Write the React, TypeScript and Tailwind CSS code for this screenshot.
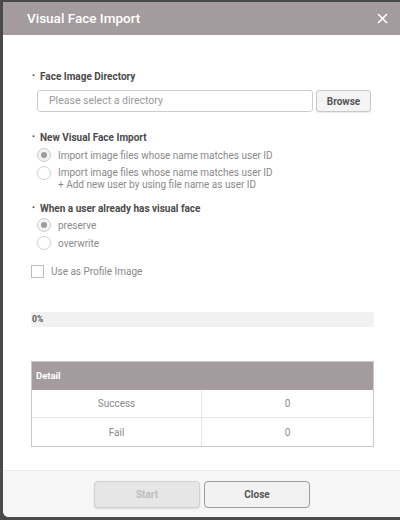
import React from "react";

const font = { fontFamily: "Roboto, 'Liberation Sans', sans-serif" };

function Radio({ checked }: { checked?: boolean }) {
    return (
        <span
            className={
                "flex h-[14px] w-[14px] shrink-0 items-center justify-center rounded-full border border-[#cfcfcf] " +
                (checked ? "bg-[#f3f3f3]" : "bg-white")
            }
        >
            {checked && <span className="h-[6px] w-[6px] rounded-full bg-[#a09a9c]" />}
        </span>
    );
}

function SectionLabel({ children }: { children: React.ReactNode }) {
    return (
        <div className="flex h-[14px] items-center text-[10px] font-bold text-[#4a4a4a]">
            <span className="w-[9px] pl-[1px] text-[8px]">•</span>
            <span>{children}</span>
        </div>
    );
}

export default function App() {
    return (
        <div className="h-[520px] w-[400px] overflow-hidden bg-[#4a4a4a]" style={font}>
            <div className="ml-[3px] mt-[2px] flex h-[515px] w-[400px] flex-col overflow-hidden rounded-bl-md bg-white">
                {/* Header */}
                <div className="flex h-[33px] shrink-0 items-center justify-between bg-[#a39b9d] pl-[24px] pr-[14px]">
                    <span className="text-[13.5px] font-medium text-white">Visual Face Import</span>
                    <svg width="11" height="11" viewBox="0 0 11 11" className="mr-[1px]">
                        <path d="M1 1L10 10M10 1L1 10" stroke="white" strokeWidth="1.6" />
                    </svg>
                </div>

                {/* Body */}
                <div className="flex flex-1 flex-col pl-[28px] pr-[29px] pt-[34px]">
                    <SectionLabel>Face Image Directory</SectionLabel>
                    <div className="ml-[6px] mt-[7px] flex h-[22px] gap-[3px]">
                        <div className="flex w-[276px] items-center rounded-[3px] border border-[#cccccc] pl-[11px] text-[10.5px] text-[#9a9a9a]">
                            Please select a directory
                        </div>
                        <div className="flex w-[55px] items-center justify-center rounded-[3px] border border-[#c8c8c8] bg-[#f4f4f4] text-[10px] font-bold text-[#555] shadow-[0_1px_1px_rgba(0,0,0,0.08)]">
                            Browse
                        </div>
                    </div>

                    <div className="mt-[18px]">
                        <SectionLabel>New Visual Face Import</SectionLabel>
                    </div>
                    <div className="ml-[6px] mt-[4px] flex h-[14px] items-center gap-[7px] text-[10px] text-[#8a8a8a]">
                        <Radio checked />
                        <span>Import image files whose name matches user ID</span>
                    </div>
                    <div className="ml-[6px] mt-[4px] flex gap-[7px] text-[10px] leading-[12px] text-[#8a8a8a]">
                        <Radio />
                        <span className="mt-[1px]">
                            Import image files whose name matches user ID
                            <br />+ Add new user by using file name as user ID
                        </span>
                    </div>

                    <div className="mt-[10px]">
                        <SectionLabel>When a user already has visual face</SectionLabel>
                    </div>
                    <div className="ml-[6px] mt-[3px] flex h-[14px] items-center gap-[7px] text-[10px] text-[#8a8a8a]">
                        <Radio checked />
                        <span>preserve</span>
                    </div>
                    <div className="ml-[6px] mt-[4px] flex h-[14px] items-center gap-[7px] text-[10px] text-[#8a8a8a]">
                        <Radio />
                        <span>overwrite</span>
                    </div>

                    <div className="mt-[15px] flex h-[13px] items-center gap-[7px] text-[10px] text-[#8a8a8a]">
                        <span className="h-[13px] w-[13px] border border-[#bdbdbd] bg-white" />
                        <span>Use as Profile Image</span>
                    </div>

                    <div className="mt-[34px] flex h-[15px] items-center rounded-[2px] bg-[#f1f1f1] pl-[1px] text-[8.5px] font-bold text-[#555]">
                        0%
                    </div>

                    <div className="mt-[34px] border border-[#c8c8c8] text-[10px] text-[#8a8a8a]">
                        <div className="flex h-[28px] items-center bg-[#a39b9d] pl-[4px] text-[9.5px] font-bold text-white">
                            Detail
                        </div>
                        <div className="grid h-[28px] grid-cols-[170px_1fr] border-b border-[#e6e6e6]">
                            <div className="flex items-center justify-center border-r border-[#e6e6e6]">Success</div>
                            <div className="flex items-center justify-center">0</div>
                        </div>
                        <div className="grid h-[28px] grid-cols-[170px_1fr]">
                            <div className="flex items-center justify-center border-r border-[#e6e6e6]">Fail</div>
                            <div className="flex items-center justify-center">0</div>
                        </div>
                    </div>
                </div>

                {/* Footer */}
                <div className="flex h-[47px] shrink-0 items-center justify-center gap-[4px] border-t border-[#ececec] bg-[#f6f6f6] pr-[2px]">
                    <div className="flex h-[27px] w-[106px] items-center justify-center rounded-[4px] border border-[#cfcfcf] bg-[#e6e6e6] text-[10px] font-bold text-[#bdbdbd] shadow-[0_1px_2px_rgba(0,0,0,0.12)]">
                        Start
                    </div>
                    <div className="flex h-[27px] w-[106px] items-center justify-center rounded-[4px] border border-[#9c9c9c] bg-[#f2f2f2] text-[10px] font-bold text-[#555]">
                        Close
                    </div>
                </div>
            </div>
        </div>
    );
}
